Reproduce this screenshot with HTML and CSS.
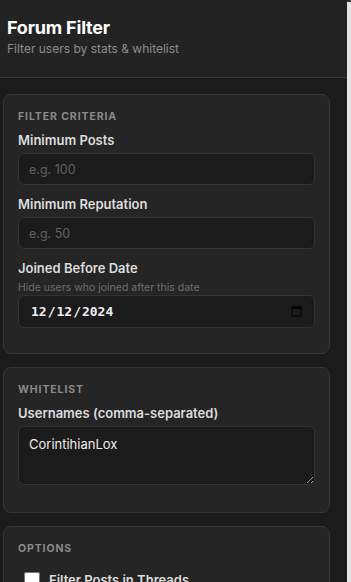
FILE: index.html
```html
<!DOCTYPE html>
<html lang="en">
<head>
<meta charset="utf-8">
<title>Forum Filter</title>
<link rel="stylesheet" href="styles.css">
</head>
<body>
<div class="shell">
  <div class="panel">
    <header class="header">
      <h1 class="title">Forum Filter</h1>
      <p class="subtitle">Filter users by stats &amp; whitelist</p>
    </header>
    <main class="content">
      <section class="card">
        <h2 class="card-title">Filter Criteria</h2>
        <div class="field">
          <label class="label" for="posts">Minimum Posts</label>
          <input class="input" id="posts" type="number" placeholder="e.g. 100">
        </div>
        <div class="field">
          <label class="label" for="rep">Minimum Reputation</label>
          <input class="input" id="rep" type="number" placeholder="e.g. 50">
        </div>
        <div class="field">
          <label class="label" for="joined">Joined Before Date</label>
          <div class="hint">Hide users who joined after this date</div>
          <input class="input date" id="joined" type="date" value="2024-12-12">
        </div>
      </section>
      <section class="card">
        <h2 class="card-title">Whitelist</h2>
        <div class="field field-last">
          <label class="label" for="users">Usernames (comma-separated)</label>
          <textarea class="input textarea" id="users">CorintihianLox</textarea>
        </div>
      </section>
      <section class="card">
        <h2 class="card-title">Options</h2>
        <label class="option"><input class="check" type="checkbox"><span>Filter Posts in Threads</span></label>
        <label class="option"><input class="check" type="checkbox"><span>Filter Thread Lists</span></label>
      </section>
    </main>
  </div>
  <div class="edge"></div>
</div>
</body>
</html>
```
FILE: styles.css
```css
html, body {
  margin: 0;
  padding: 0;
  height: 100%;
  overflow: hidden;
  background: #1b1b1b;
}
body {
  font-family: Inter, "Noto Sans", "Liberation Sans", sans-serif;
  color: #e6e6e6;
}
.shell {
  display: flex;
  height: 100%;
}
.panel {
  width: 347px;
  flex: none;
  background: #1b1b1b;
}
.edge {
  flex: 1;
  background: #e4e4e4;
  border-top: 2px solid #3a3346;
}
.header {
  background: #232323;
  border-bottom: 1px solid #383838;
  padding: 17px 7px 20px;
}
.title {
  margin: 0;
  font-size: 18px;
  line-height: 22px;
  font-weight: 700;
  color: #ffffff;
  letter-spacing: -0.2px;
}
.subtitle {
  margin: 2px 0 0;
  font-size: 12px;
  line-height: 16px;
  color: #8c8c8c;
}
.content {
  padding: 16px 17px 0 3px;
  display: flex;
  flex-direction: column;
  gap: 13px;
}
.card {
  background: #252525;
  border: 1px solid #353535;
  border-radius: 8px;
  padding: 15px 14px 14px;
}
.card-title {
  margin: 0 0 8px;
  font-size: 10.5px;
  line-height: 14px;
  font-weight: 700;
  letter-spacing: 0.9px;
  text-transform: uppercase;
  color: #8a8a8a;
}
.field {
  display: flex;
  flex-direction: column;
  margin-bottom: 11px;
}
.field-last {
  margin-bottom: 13px;
}
.label {
  font-size: 13px;
  line-height: 16px;
  font-weight: 600;
  color: #dcdcdc;
  margin-bottom: 5px;
}
.hint {
  font-size: 10.5px;
  line-height: 14px;
  color: #6e6e6e;
  margin: 0;
}
.input {
  box-sizing: border-box;
  width: 100%;
  height: 32px;
  background: #1b1b1b;
  border: 1px solid #333333;
  border-radius: 6px;
  padding: 0 10px;
  font-family: inherit;
  font-size: 12.5px;
  color: #eeeeee;
  outline: none;
}
.input::placeholder {
  color: #626262;
}
.date {
  height: 33px;
  font-family: "DejaVu Sans Mono", monospace;
  font-size: 13px;
  font-weight: 600;
  padding: 0 9px 0 11px;
}
.date::-webkit-calendar-picker-indicator {
  opacity: 0.9;
}
.textarea {
  display: block;
  height: 59px;
  padding: 8px 10px;
  font-size: 13px;
  line-height: 18px;
  resize: vertical;
}
.option {
  display: flex;
  align-items: center;
  gap: 9px;
  padding: 8px 6px 4px;
  font-size: 13px;
  font-weight: 600;
  color: #dcdcdc;
}
.check {
  margin: 0;
  width: 16px;
  height: 16px;
  flex: none;
}
```
